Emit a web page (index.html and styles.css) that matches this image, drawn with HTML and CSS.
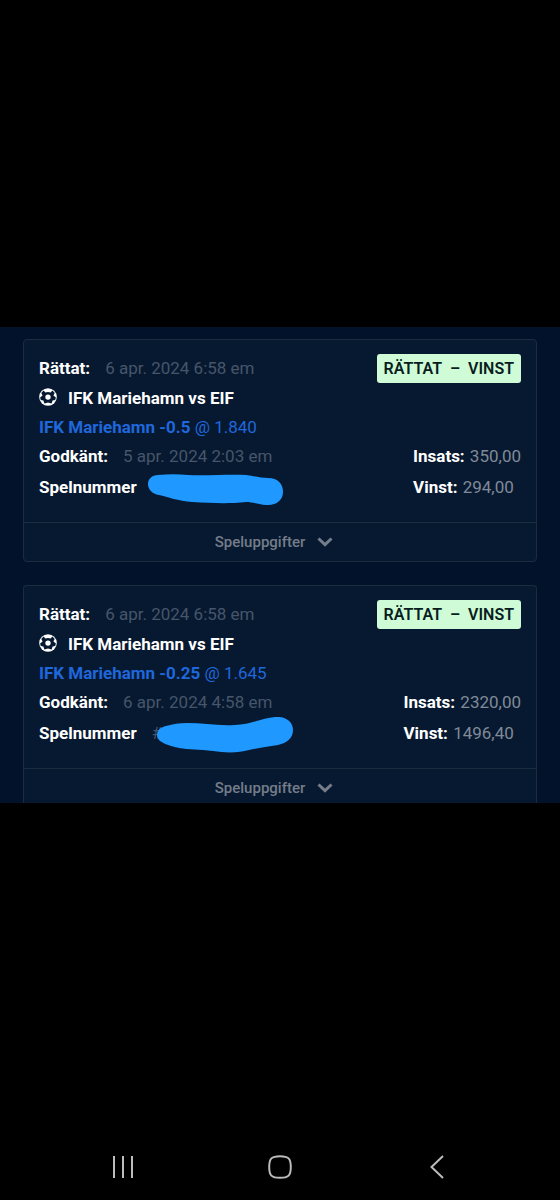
FILE: index.html
```html
<!DOCTYPE html>
<html lang="sv">
<head>
<meta charset="utf-8">
<meta name="viewport" content="width=device-width, initial-scale=1">
<title>Spelhistorik</title>
<link rel="stylesheet" href="styles.css">
</head>
<body>
<svg class="defs" aria-hidden="true">
  <symbol id="ball" viewBox="0 0 18 18">
    <circle cx="9" cy="9" r="8.800" fill="#fff"/>
    <path fill="#071930" d="M9 4L11.500 4.400 13.500 2.600 15.700 4.900 14.400 7.600 16.900 9.500 16.200 12 13.600 12.400 12.600 15.400 9 14.400 5.400 15.400 4.400 12.400 1.800 12 1.100 9.500 3.600 7.600 2.300 4.900 4.500 2.600 6.500 4.400Z"/>
    <circle cx="9" cy="9.100" r="2.700" fill="#fff"/>
  </symbol>
  <symbol id="chevron" viewBox="0 0 16 10">
    <path d="M1.500 1.500L8 7.700l6.500-6.200" fill="none" stroke="currentColor" stroke-width="3"/>
  </symbol>
</svg>

<main class="bets">
  <article class="card">
    <div class="card-body">
      <div class="info">
        <p class="row"><b>Rättat:</b><span class="date">6 apr. 2024 6:58 em</span></p>
        <p class="row match"><svg class="ball"><use href="#ball"/></svg><b>IFK Mariehamn vs EIF</b></p>
        <p class="row pick"><span><b>IFK Mariehamn -0.5</b> @ 1.840</span></p>
        <p class="row"><b>Godkänt:</b><span class="date">5 apr. 2024 2:03 em</span></p>
        <p class="row number"><b>Spelnummer</b>
          <svg class="mark mark-first" viewBox="0 0 136 32" aria-hidden="true"><path d="M10 1C20 0 30 0 40 1C60 2 80 0 98 1C106 2 112 4 120 4C130 4 135 10 135 18C135 26 128 32 118 31C110 30 104 28 98 28C80 30 64 29 44 28C30 27 20 23 11 21C4 20 0 15 0 10C0 5 4 1 10 1Z"/></svg>
        </p>
      </div>
      <div class="result">
        <span class="badge">RÄTTAT&nbsp; –&nbsp; VINST</span>
        <div class="sums">
          <p class="stake"><b>Insats:</b> 350,00</p>
          <p class="win"><b>Vinst:</b> 294,00</p>
        </div>
      </div>
    </div>
    <button class="details" type="button">Speluppgifter<svg class="chevron"><use href="#chevron"/></svg></button>
  </article>

  <article class="card card-cut">
    <div class="card-body">
      <div class="info">
        <p class="row"><b>Rättat:</b><span class="date">6 apr. 2024 6:58 em</span></p>
        <p class="row match"><svg class="ball"><use href="#ball"/></svg><b>IFK Mariehamn vs EIF</b></p>
        <p class="row pick"><span><b>IFK Mariehamn -0.25</b> @ 1.645</span></p>
        <p class="row"><b>Godkänt:</b><span class="date">6 apr. 2024 4:58 em</span></p>
        <p class="row number"><b>Spelnummer</b><span class="date">#</span>
          <svg class="mark mark-second" viewBox="0 0 136 36" aria-hidden="true"><path d="M9 9C16 7 22 6 30 6C46 6 60 9 78 8C94 7 106 1 118 0C129 -1 136 5 136 13C136 21 130 26 121 28C110 30 100 31 92 33C82 36 68 36 56 34C42 32 32 33 22 31C14 29 0 26 0 18C0 13 4 10 9 9Z"/></svg>
        </p>
      </div>
      <div class="result">
        <span class="badge">RÄTTAT&nbsp; –&nbsp; VINST</span>
        <div class="sums">
          <p class="stake"><b>Insats:</b> 2320,00</p>
          <p class="win"><b>Vinst:</b> 1496,40</p>
        </div>
      </div>
    </div>
    <button class="details" type="button">Speluppgifter<svg class="chevron"><use href="#chevron"/></svg></button>
  </article>
</main>

<nav class="system-bar" aria-label="System">
  <button type="button" aria-label="Senaste appar"><svg viewBox="0 0 24 24"><path d="M3 1v22M12 1v22M21 1v22"/></svg></button>
  <button type="button" aria-label="Hem"><svg viewBox="0 0 24 24"><path d="M12 1.200C20.500 1.200 22.800 3.500 22.800 12S20.500 22.800 12 22.800 1.200 20.500 1.200 12 3.500 1.200 12 1.200Z"/></svg></button>
  <button type="button" aria-label="Tillbaka"><svg viewBox="0 0 24 24"><path d="M18 1L6.500 12 18 23"/></svg></button>
</nav>
</body>
</html>
```
FILE: styles.css
```css
* {
  box-sizing: border-box;
}

body {
  margin: 0;
  min-height: 100vh;
  padding-top: 327px;
  display: flex;
  flex-direction: column;
  background: #000;
  color: #fff;
  font: 17px/30px Roboto, sans-serif;
}

p {
  margin: 0;
}

b {
  font-weight: 700;
}

button {
  padding: 0;
  border: 0;
  background: none;
  font: inherit;
}

.defs {
  position: absolute;
  width: 0;
  height: 0;
}

.bets {
  display: flex;
  flex-direction: column;
  gap: 23px;
  padding: 12px 23px 0;
  background: #02122a;
}

.card {
  border: 1px solid #1c2c3f;
  border-radius: 4px;
  background: #071930;
}

.card-body {
  display: flex;
  justify-content: space-between;
  padding: 13px 15px 19px;
}

.row {
  display: flex;
  align-items: center;
  gap: 15px;
}

.date {
  color: #46556a;
}

.ball {
  width: 18px;
  height: 18px;
  margin-bottom: 3px;
}

.match {
  gap: 11px;
}

.pick {
  color: #1f67dc;
  line-height: 28px;
}

.number {
  position: relative;
  line-height: 32px;
}

.mark {
  position: absolute;
  fill: #1f98ff;
}

.mark-first {
  left: 109px;
  top: 3px;
  width: 136px;
  height: 32px;
}

.mark-second {
  left: 118px;
  top: 0;
  width: 136px;
  height: 36px;
}

.result {
  display: flex;
  flex-direction: column;
  justify-content: space-between;
  align-items: flex-end;
}

.badge {
  margin-top: 1px;
  padding: 0 7px;
  border-radius: 3px;
  background: #d0fbd7;
  color: #071d20;
  font-size: 16px;
  font-weight: 600;
  line-height: 29px;
}

.sums {
  color: #808a98;
}

.sums b {
  margin-right: 1px;
  color: #fff;
}

.win {
  line-height: 32px;
}

.details {
  display: flex;
  justify-content: center;
  align-items: center;
  gap: 12px;
  width: 100%;
  padding: 4px 12px 4px 0;
  border-top: 1px solid #1c2c3f;
  color: #747d89;
  font-size: 15px;
  font-weight: 500;
}

.chevron {
  width: 16px;
  height: 10px;
}

.card-cut {
  border-bottom: 0;
  border-radius: 4px 4px 0 0;
}

.card-cut .details {
  padding-bottom: 0;
}

.system-bar {
  display: grid;
  grid-template-columns: repeat(3, 1fr);
  margin-top: auto;
  padding: 0 45px 21px;
}

.system-bar button {
  display: flex;
  justify-content: center;
}

.system-bar svg {
  width: 24px;
  height: 24px;
  fill: none;
  stroke: #bcbcbc;
  stroke-width: 2;
}
```
